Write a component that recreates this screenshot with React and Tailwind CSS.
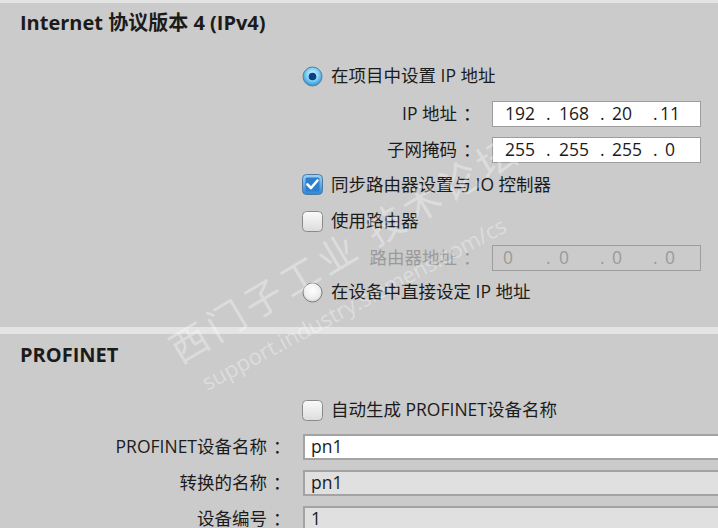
import React from "react";

function Radio({ on }) {
  return (
    <svg width="21" height="21" viewBox="0 0 21 21" className="shrink-0">
      <defs>
        <radialGradient id={on ? "ron" : "roff"} cx="50%" cy="40%" r="60%">
          {on ? (
            <>
              <stop offset="0%" stopColor="#e8f8ff" />
              <stop offset="55%" stopColor="#7fd0f5" />
              <stop offset="100%" stopColor="#2a8fd0" />
            </>
          ) : (
            <>
              <stop offset="0%" stopColor="#ffffff" />
              <stop offset="70%" stopColor="#eeeeee" />
              <stop offset="100%" stopColor="#cfcfcf" />
            </>
          )}
        </radialGradient>
      </defs>
      <circle cx="10.5" cy="10.5" r="9.5" fill={`url(#${on ? "ron" : "roff"})`} stroke={on ? "#5d7f99" : "#7e7e7e"} strokeWidth="1" />
      {on && <circle cx="10.5" cy="10.5" r="3.8" fill="#0b3f86" />}
    </svg>
  );
}

function Check({ on }) {
  return (
    <svg width="21" height="21" viewBox="0 0 21 21" className="shrink-0">
      <defs>
        <linearGradient id="con" x1="0" y1="0" x2="0" y2="1">
          <stop offset="0%" stopColor="#9fd3f7" />
          <stop offset="100%" stopColor="#2f86d4" />
        </linearGradient>
        <linearGradient id="coff" x1="0" y1="0" x2="0" y2="1">
          <stop offset="0%" stopColor="#fafafa" />
          <stop offset="100%" stopColor="#dcdcdc" />
        </linearGradient>
      </defs>
      <rect x="0.5" y="0.5" width="20" height="20" rx="4" fill={on ? "url(#con)" : "url(#coff)"} stroke={on ? "#4d7aa3" : "#8a8a8a"} />
      {on && (
        <>
          <rect x="3.5" y="3.5" width="14" height="14" rx="1.5" fill="#2c7fd0" />
          <path d="M5.5 10.5 L9 14 L15.5 6.5" fill="none" stroke="#ffffff" strokeWidth="2.6" strokeLinecap="round" strokeLinejoin="round" />
        </>
      )}
    </svg>
  );
}

function Option({ children, kind, on }) {
  return (
    <div className="flex items-center gap-[8px] pl-[302px]">
      {kind === "radio" ? <Radio on={on} /> : <Check on={on} />}
      <span className="whitespace-nowrap">{children}</span>
    </div>
  );
}

function Label({ w, children }) {
  return (
    <div className={`${w} shrink-0 flex justify-end whitespace-nowrap`}>
      <span>{children}</span>
      <span className="w-[22px] pl-[6px]">：</span>
    </div>
  );
}

export default function App() {
  return (
    <div className="relative w-[718px] h-[528px] overflow-hidden bg-[#cbcbcb] text-[#1b1b1b] text-[17.5px] leading-none font-['Open_Sans','Noto_Sans_CJK_SC',sans-serif]">
      <div className="h-[3px] bg-[#e4e4e4]" />

      {/* IPv4 section */}
      <div className="h-[40px] flex items-center pl-[20px] text-[20px] font-bold">
        Internet 协议版本 4 (IPv4)
      </div>
      <div className="h-[14px]" />
      <div className="h-[38px] flex items-center">
        <Option kind="radio" on>在项目中设置 IP 地址</Option>
      </div>
      <div className="h-[37px] flex items-center">
        <Label w="w-[479px]">IP 地址</Label>
        <div className="ml-[13px] w-[209px] h-[26px] shrink-0 bg-white border border-[#9d9d9d] flex items-center pl-[12px]">
          <span className="w-[41px]">192</span>
          <span className="w-[13px]">.</span>
          <span className="w-[41px]">168</span>
          <span className="w-[12px]">.</span>
          <span className="w-[41px]">20</span>
          <span className="w-[7px]">.</span>
          <span>11</span>
        </div>
      </div>
      <div className="h-[35px] flex items-center">
        <Label w="w-[479px]">子网掩码</Label>
        <div className="ml-[13px] w-[209px] h-[26px] shrink-0 bg-white border border-[#9d9d9d] flex items-center pl-[12px]">
          <span className="w-[41px]">255</span>
          <span className="w-[13px]">.</span>
          <span className="w-[41px]">255</span>
          <span className="w-[12px]">.</span>
          <span className="w-[41px]">255</span>
          <span className="w-[12px]">.</span>
          <span>0</span>
        </div>
      </div>
      <div className="h-[35px] flex items-center">
        <Option kind="check" on>同步路由器设置与 IO 控制器</Option>
      </div>
      <div className="h-[38px] flex items-center">
        <Option kind="check">使用路由器</Option>
      </div>
      <div className="h-[36px] flex items-center text-[#9a9a9a]">
        <Label w="w-[479px]">路由器地址</Label>
        <div className="ml-[13px] w-[209px] h-[26px] shrink-0 border border-[#9d9d9d] flex items-center pl-[10px]">
          <span className="w-[43px]">0</span>
          <span className="w-[13px]">.</span>
          <span className="w-[41px]">0</span>
          <span className="w-[12px]">.</span>
          <span className="w-[41px]">0</span>
          <span className="w-[12px]">.</span>
          <span>0</span>
        </div>
      </div>
      <div className="h-[32px] flex items-center">
        <Option kind="radio">在设备中直接设定 IP 地址</Option>
      </div>
      <div className="h-[19px]" />
      <div className="h-[7px] bg-[#e4e4e4]" />

      {/* PROFINET section */}
      <div className="h-[42px] flex items-center pl-[20px] text-[20px] font-bold">PROFINET</div>
      <div className="h-[16px]" />
      <div className="h-[36px] flex items-center">
        <Option kind="check">自动生成 PROFINET设备名称</Option>
      </div>
      <div className="h-[37px] flex items-center">
        <Label w="w-[289px]">PROFINET设备名称</Label>
        <div className="ml-[14px] w-[440px] h-[26px] shrink-0 bg-white border-[2px] border-[#a3a3a3] flex items-center pl-[6px]">pn1</div>
      </div>
      <div className="h-[36px] flex items-center">
        <Label w="w-[289px]">转换的名称</Label>
        <div className="ml-[14px] w-[440px] h-[26px] shrink-0 bg-[#e0e0e0] border-[2px] border-[#a3a3a3] flex items-center pl-[6px]">pn1</div>
      </div>
      <div className="h-[36px] flex items-center">
        <Label w="w-[289px]">设备编号</Label>
        <div className="ml-[14px] w-[440px] h-[26px] shrink-0 bg-[#e0e0e0] border-[2px] border-[#a3a3a3] flex items-center pl-[6px]">1</div>
      </div>

      {/* watermark */}
      <div className="pointer-events-none absolute left-[172px] top-[332px] origin-left -rotate-[31deg] whitespace-nowrap text-[38px] tracking-[5px] text-white/35 font-['Noto_Sans_CJK_SC',sans-serif]">
        西门子工业 技术论坛
      </div>
      <div className="pointer-events-none absolute left-[203px] top-[372px] origin-left -rotate-[28deg] whitespace-nowrap text-[22px] text-white/35 font-['Open_Sans',sans-serif]">
        support.industry.siemens.com/cs
      </div>
    </div>
  );
}
